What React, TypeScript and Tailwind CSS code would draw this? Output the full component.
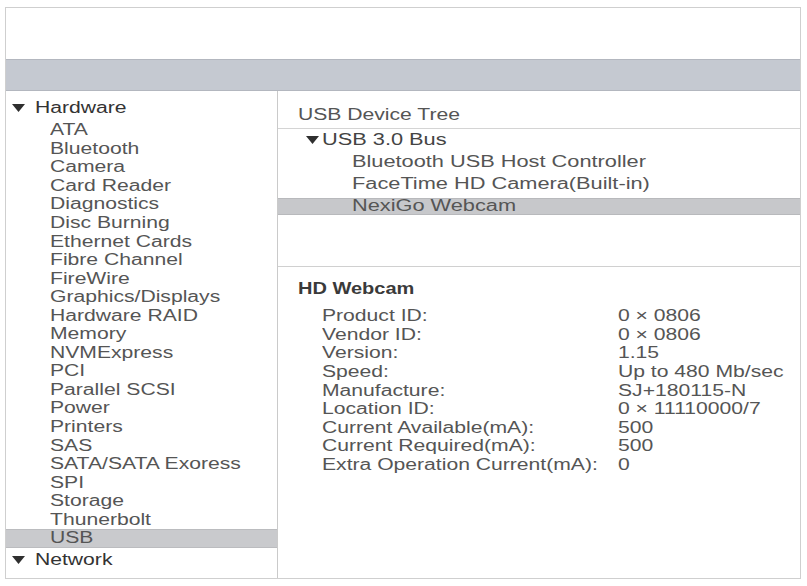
import React from "react";

const hardwareItems = [
  "ATA",
  "Bluetooth",
  "Camera",
  "Card Reader",
  "Diagnostics",
  "Disc Burning",
  "Ethernet Cards",
  "Fibre Channel",
  "FireWire",
  "Graphics/Displays",
  "Hardware RAID",
  "Memory",
  "NVMExpress",
  "PCI",
  "Parallel SCSI",
  "Power",
  "Printers",
  "SAS",
  "SATA/SATA Exoress",
  "SPI",
  "Storage",
  "Thunerbolt",
  "USB",
];

const deviceProps: [string, string][] = [
  ["Product ID:", "0 × 0806"],
  ["Vendor ID:", "0 × 0806"],
  ["Version:", "1.15"],
  ["Speed:", "Up to 480 Mb/sec"],
  ["Manufacture:", "SJ+180115-N"],
  ["Location ID:", "0 × 11110000/7"],
  ["Current Available(mA):", "500"],
  ["Current Required(mA):", "500"],
  ["Extra Operation Current(mA):", "0"],
];

function Disclosure() {
  return (
    <svg width="13" height="8" viewBox="0 0 13 8" className="shrink-0">
      <polygon points="0,0 13,0 6.5,8" fill="#2f2f2f" />
    </svg>
  );
}

// the screenshot text is stretched wide, so each label gets a horizontal scale
function Txt({ children, wide = "sidebar" }: { children: React.ReactNode; wide?: "sidebar" | "tree" | "props" }) {
  const cls =
    wide === "tree"
      ? "scale-x-[1.36]"
      : wide === "props"
        ? "scale-x-[1.32]"
        : "scale-x-[1.32]";
  return <span className={`inline-block origin-left whitespace-nowrap ${cls}`}>{children}</span>;
}

function Sidebar() {
  return (
    <aside className="w-[272px] shrink-0 border-r border-[#cacaca] pt-[6px] text-[16px] text-[#555]">
      <div className="flex h-[22px] items-center gap-[10px] pl-[6px] text-[#333]">
        <Disclosure />
        <Txt>Hardware</Txt>
      </div>
      <ul className="mt-[2px]">
        {hardwareItems.map((item) => (
          <li
            key={item}
            className={`flex h-[18.55px] items-center pl-[44px] leading-none ${
              item === "USB" ? "bg-[#c9cacd] border-y border-[#bbbcbf]" : ""
            }`}
          >
            <Txt>{item}</Txt>
          </li>
        ))}
      </ul>
      <div className="flex h-[25px] items-center gap-[10px] pl-[6px] text-[#333]">
        <Disclosure />
        <Txt>Network</Txt>
      </div>
    </aside>
  );
}

function DeviceTree() {
  const children = ["Bluetooth USB Host Controller", "FaceTime HD Camera(Built-in)", "NexiGo Webcam"];
  return (
    <div className="h-[175px] shrink-0 text-[16px] text-[#555]">
      <div className="mb-[3px] mt-[14px] flex h-[20px] items-center pl-[20px]">
        <Txt wide="props">USB Device Tree</Txt>
      </div>
      <div className="border-t border-[#d4d4d4]">
        <div className="flex h-[22px] items-center gap-[3px] pl-[28px] text-[#444]">
          <Disclosure />
          <Txt wide="tree">USB 3.0 Bus</Txt>
        </div>
        {children.map((name) => {
          const selected = name === "NexiGo Webcam";
          return (
            <div key={name} className="flex h-[22px] items-center">
              <div
                className={`flex h-[17px] w-full items-center pl-[74px] ${
                  selected ? "bg-[#c7c8cb] border-y border-[#b8b9bc]" : ""
                }`}
              >
                <Txt wide="tree">{name}</Txt>
              </div>
            </div>
          );
        })}
      </div>
    </div>
  );
}

function DeviceInfo() {
  return (
    <div className="flex-1 border-t border-[#d0d0d0] pt-[12px] text-[16px] text-[#555]">
      <div className="flex h-[20px] items-center pl-[20px] font-bold text-[#3a3a3a]">
        <span className="inline-block origin-left scale-x-[1.25] whitespace-nowrap">HD Webcam</span>
      </div>
      <div className="mt-[8px]">
        {deviceProps.map(([label, value]) => (
          <div key={label} className="flex h-[18.6px] items-center pl-[44px]">
            <div className="w-[296px] shrink-0">
              <Txt wide="props">{label}</Txt>
            </div>
            <Txt wide="props">{value}</Txt>
          </div>
        ))}
      </div>
    </div>
  );
}

export default function App() {
  return (
    <div className="h-[586px] w-[807px] bg-white pl-[5px] pt-[7px] font-['Liberation_Sans',Arial,sans-serif]">
      <div className="flex h-[572px] w-[796px] flex-col border border-[#cfcfcf]">
        <div className="h-[51px] shrink-0" />
        <div className="h-[32px] shrink-0 border-y border-[#b3b7bf] bg-[#c5c9d1]" />
        <div className="flex min-h-0 flex-1">
          <Sidebar />
          <main className="flex min-w-0 flex-1 flex-col">
            <DeviceTree />
            <DeviceInfo />
          </main>
        </div>
      </div>
    </div>
  );
}
